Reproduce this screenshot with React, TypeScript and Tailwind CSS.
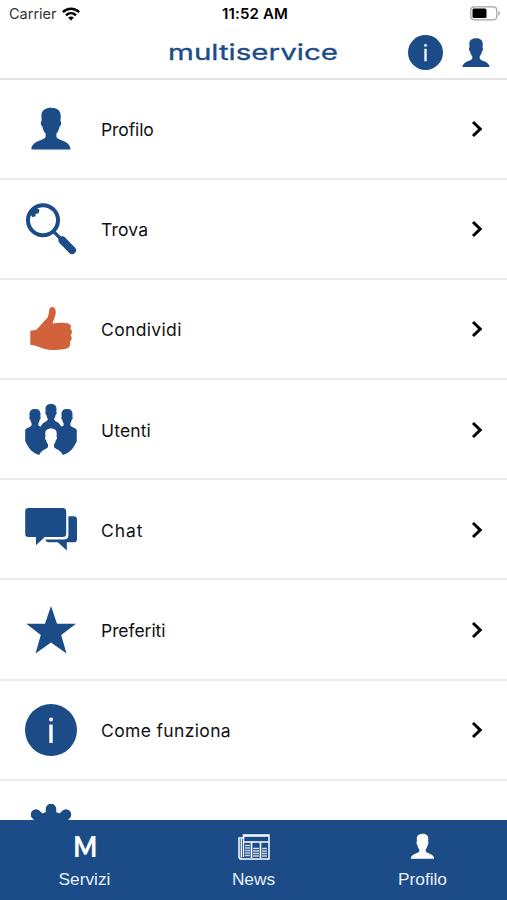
import type { ReactNode } from "react";

type IconProps = { className?: string };

type MenuItem = {
  label?: string;
  icon: ReactNode;
  spacing?: string;
};

const PERSON =
  "M26 4.8c6 0 9.8 2.7 9.8 8.6l-.4 4.6c1.4.6.8 4.8-.8 5.4-.5 3.2-1.6 5.4-3.2 7.2v3.2c1.6 4.2 13.9 3.6 14.2 12.6H6.4c.3-9 12.6-8.4 14.2-12.6v-3.2c-1.6-1.8-2.7-4-3.2-7.2-1.6-.6-2.2-4.8-.8-5.4l-.2-6.6c.6-4.2 4.4-6.6 9.6-6.6Z";

// head and neck of one member of the group icon, centred on x = 0
const HEAD =
  "M0 0C3.8 0 5.7 2 5.500 5.500L5.300 7.500c.8.4.4 3-.6 3.300-.3 1.800-.9 3-1.500 4V19h-6.400v-4.200c-.6-1-1.200-2.200-1.500-4-1-.3-1.400-2.900-.6-3.300L-5.500 5.500C-5.700 2-3.800 0 0 0Z";

function PersonIcon({ className }: IconProps) {
  return (
    <svg viewBox="0 0 52 52" className={className} fill="currentColor">
      <path d={PERSON} />
    </svg>
  );
}

function SearchIcon({ className }: IconProps) {
  return (
    <svg viewBox="0 0 52 52" className={className} fill="none" stroke="currentColor">
      <circle cx="18" cy="17.2" r="15" strokeWidth="4" />
      <path d="M28.5 28.5 36 36" strokeWidth="3.2" />
      <path d="m37.5 37.4 9.6 9.8" strokeWidth="7.8" strokeLinecap="round" />
      <path d="m34.4 37.4 3-3" strokeWidth="3.5" />
      <path d="m4.5 10 6-5.500 4 2.200-.8 3.600-2.900.5-.5 2.800-3 .5Z" fill="currentColor" stroke="none" />
    </svg>
  );
}

function ThumbIcon({ className }: IconProps) {
  return (
    <svg viewBox="0 0 52 52" className={className} fill="currentColor">
      <path d="M5.3 27.8 11 27c4-3.500 7-8.200 10.800-11.600 2.300-2.400 1.700-6 2.600-9.200.5-2.800 4-3 5.400-.9 1.900 3 .7 7.600-.7 10.600-.7 1.500-1.500 3.300-1.400 4.600 4-.5 11-1.200 15.600.1 2.700.8 3.300 3.500 2 5.200 2 1 2.200 4.800.3 6.400 1.600 1.600 1.500 5-.7 6.200 1 2.400.1 5.800-2.600 6.800-6.400 2.300-17.500 2.200-24.300.2-4.200-1.300-8-3.300-12.700-3.600Z" />
    </svg>
  );
}

function UsersIcon({ className }: IconProps) {
  return (
    <svg viewBox="0 0 52 52" className={className} fill="currentColor">
      <path d={HEAD} transform="translate(26 0)" />
      <path d={HEAD} transform="translate(10 5)" />
      <path d={HEAD} transform="translate(42 5)" />
      <path d="M.2 26C2 23 6.600 23.500 7 20H13C13.300 22 14.500 22.200 15.800 22.600C17.500 17.500 22.500 18 23 15H29C29.500 18 34.500 17.500 36.200 22.600C37.500 22.200 38.700 22 39 20H45C45.400 23.500 50 23 51.800 26V37C49 44 44.500 49 38 51H14C7.500 49 3 44 .2 37Z" />
      <path
        d="M26 24.500c4.200 0 6 2.200 5.700 5.700l-.2 2.200c.9.5.5 3.300-.6 3.600-.3 1.900-1 3.200-1.900 4.200V43c1 2.500 7.600 2.500 9 9H14c1.400-6.500 8-6.500 9-9v-2.800c-.9-1-1.600-2.300-1.900-4.200-1.100-.3-1.500-3.100-.6-3.600l-.2-2.200c-.3-3.500 1.500-5.700 5.700-5.700Z"
        fill="#fff"
      />
    </svg>
  );
}

function ChatIcon({ className }: IconProps) {
  return (
    <svg viewBox="0 0 52 52" className={className} fill="currentColor">
      <path d="M3.5 4h34.200c2.400 0 3.500 1.200 3.500 3.500v22c0 2.400-1.100 3.600-3.500 3.600H19.800L11 41.200v-8.100H3.500C1.200 33.100.2 31.900.2 29.500v-22C.2 5.200 1.200 4 3.500 4Z" />
      <path d="M43.400 12.300h5.400c2.200 0 3.200 1.200 3.200 3.300v19.300c0 2.200-1 3.400-3.200 3.400h-7v8.100l-9-8.100H24c-2.200 0-3.200-.9-3.500-2.700h18.200c3 0 4.700-1.800 4.700-4.700Z" />
    </svg>
  );
}

function StarIcon({ className }: IconProps) {
  return (
    <svg viewBox="0 0 52 52" className={className} fill="currentColor">
      <path d="m26 2 6 17.700h19L36.200 31l5.300 18.500L26 38.500 10.500 49.500 15.800 31 1.300 19.700H20Z" />
    </svg>
  );
}

function InfoIcon({ className }: IconProps) {
  return (
    <svg viewBox="0 0 52 52" className={className}>
      <circle cx="26" cy="26" r="26" fill="currentColor" />
      <circle cx="26" cy="15.5" r="2" fill="#fff" />
      <path d="M24.300 20.500h3.400v18.500h-3.400Z" fill="#fff" />
    </svg>
  );
}

function GearIcon({ className }: IconProps) {
  return (
    <svg viewBox="0 0 52 52" className={className} fill="none" stroke="currentColor">
      <circle cx="26" cy="26" r="12.5" strokeWidth="12" />
      <path
        d="M26 5v8M26 39v8M5 26h8M39 26h8M11 10.500l6 6M35 35l6 6M41 10.500l-6 6M17 35l-6 6"
        strokeWidth="10.5"
        strokeLinecap="round"
      />
    </svg>
  );
}

function NewsIcon({ className }: IconProps) {
  return (
    <svg viewBox="0 0 32 26" className={className} fill="none" stroke="currentColor">
      <path d="M5.500 1h25.500v24H3.500C1.800 25 1 24.200 1 22.500V4h4.500Z" strokeWidth="1.5" />
      <path d="M5.500 3v20M3.300 5v18.500" strokeWidth="1.3" />
      <path d="M5.500 2h25M5.500 8h25M13.500 8.500v15.500M22.500 8.500v15.500" strokeWidth="1.6" />
      <path
        d="M7 11.500h5M7 14h5M7 16.500h5M7 19h5M7 21.500h5M15 14.500h6M15 17h6M15 19.500h6M15 22h6M24 14.500h5M24 17h5M24 19.500h5M24 22h5"
        strokeWidth="1.5"
        strokeOpacity=".75"
      />
    </svg>
  );
}

function WifiIcon() {
  return (
    <svg viewBox="0 0 18 14" className="h-[14px] w-[18px]" fill="none" stroke="#000" strokeWidth="2.5">
      <path d="M.9 5.200c4.600-4.500 11.600-4.500 16.200 0M4 8.300c2.900-2.800 7.100-2.800 10 0" />
      <path d="m9 13.500-2.900-3c1.700-1.500 4.100-1.500 5.800 0Z" fill="#000" stroke="none" />
    </svg>
  );
}

function BatteryIcon() {
  return (
    <svg viewBox="0 0 31 15" className="h-[15px] w-[31px]">
      <rect x=".8" y=".8" width="26" height="13" rx="3.5" fill="none" stroke="#a3a3a3" strokeWidth="1.2" />
      <rect x="2.5" y="2.5" width="14" height="9.6" rx="1.5" fill="#000" />
      <path d="M28.300 5c2 .8 2 4 0 4.800Z" fill="#a3a3a3" />
    </svg>
  );
}

const items: MenuItem[] = [
  { label: "Profilo", icon: <PersonIcon className="size-[52px]" />, spacing: "tracking-[-0.1px]" },
  { label: "Trova", icon: <SearchIcon className="size-[52px]" />, spacing: "tracking-[0.2px]" },
  { label: "Condividi", icon: <ThumbIcon className="size-[52px] text-[#d1623b]" />, spacing: "tracking-[0.35px]" },
  { label: "Utenti", icon: <UsersIcon className="size-[52px]" />, spacing: "tracking-[0.15px]" },
  { label: "Chat", icon: <ChatIcon className="size-[52px]" />, spacing: "tracking-[0.9px]" },
  { label: "Preferiti", icon: <StarIcon className="size-[52px]" />, spacing: "tracking-[-0.05px]" },
  { label: "Come funziona", icon: <InfoIcon className="size-[52px]" />, spacing: "tracking-[0.35px]" },
  { icon: <GearIcon className="size-[52px]" /> },
];

function MenuRow({ label, icon, spacing }: MenuItem) {
  return (
    <li className="flex h-[100.2px] shrink-0 items-center border-b-2 border-[#ebebeb] pt-[1px] pr-[24px] pl-[25px]">
      {icon}
      {label && <span className={`ml-6 pt-[2px] text-[17.5px] text-[#111] ${spacing ?? ""}`}>{label}</span>}
      {label && (
        <svg viewBox="0 0 12 18" className="ml-auto h-[18px] w-[12px]" fill="none" stroke="#000" strokeWidth="3">
          <path d="m2 2 7.2 7L2 16" />
        </svg>
      )}
    </li>
  );
}

function Tab({ label, children }: { label: string; children: ReactNode }) {
  return (
    <div className="flex flex-1 flex-col items-center pt-[13px]">
      <div className="flex h-[28px] items-center justify-center">{children}</div>
      <span className="mt-[5px] font-['Liberation_Sans',sans-serif] text-[17.3px] leading-[26px] text-[#e8eff8]">
        {label}
      </span>
    </div>
  );
}

export default function App() {
  return (
    <div className="flex h-[900px] w-[507px] flex-col overflow-hidden bg-white font-['Inter',sans-serif] text-[#1b4c88]">
      <div className="grid h-[27px] shrink-0 grid-cols-3 items-center pr-[6px] pl-[9px] text-black">
        <div className="flex items-center gap-[5px] text-[14.5px] text-[#333]">
          Carrier
          <WifiIcon />
        </div>
        <span className="pt-[2px] text-center text-[15px] font-semibold tracking-[0.15px]">11:52 AM</span>
        <div className="flex justify-end">
          <BatteryIcon />
        </div>
      </div>

      <header className="flex h-[52.5px] shrink-0 items-center border-b-2 border-[#e3e3e3] pt-[1px] pr-[5px] pl-[167px]">
        <svg viewBox="0 0 172 30" className="h-[30px] w-[172px] shrink-0" fill="currentColor">
          <text
            x="1"
            y="22"
            fontSize="22"
            fontWeight="400"
            stroke="currentColor"
            strokeWidth=".3"
            textLength="170"
            lengthAdjust="spacingAndGlyphs"
          >
            multiservice
          </text>
        </svg>
        <InfoIcon className="ml-[69px] size-[35px]" />
        <PersonIcon className="ml-[15px] size-[36px]" />
      </header>

      <ul className="flex min-h-0 flex-1 flex-col overflow-hidden">
        {items.map((item, i) => (
          <MenuRow key={i} {...item} />
        ))}
      </ul>

      <nav className="flex h-[80.5px] shrink-0 bg-[#1b4c88] text-white">
        <Tab label="Servizi">
          <span className="ml-[2px] scale-x-90 pb-[2px] font-['Lato',sans-serif] text-[28px] leading-none font-black">
            M
          </span>
        </Tab>
        <Tab label="News">
          <NewsIcon className="h-[26px] w-[32px]" />
        </Tab>
        <Tab label="Profilo">
          <PersonIcon className="size-[31px]" />
        </Tab>
      </nav>
    </div>
  );
}
